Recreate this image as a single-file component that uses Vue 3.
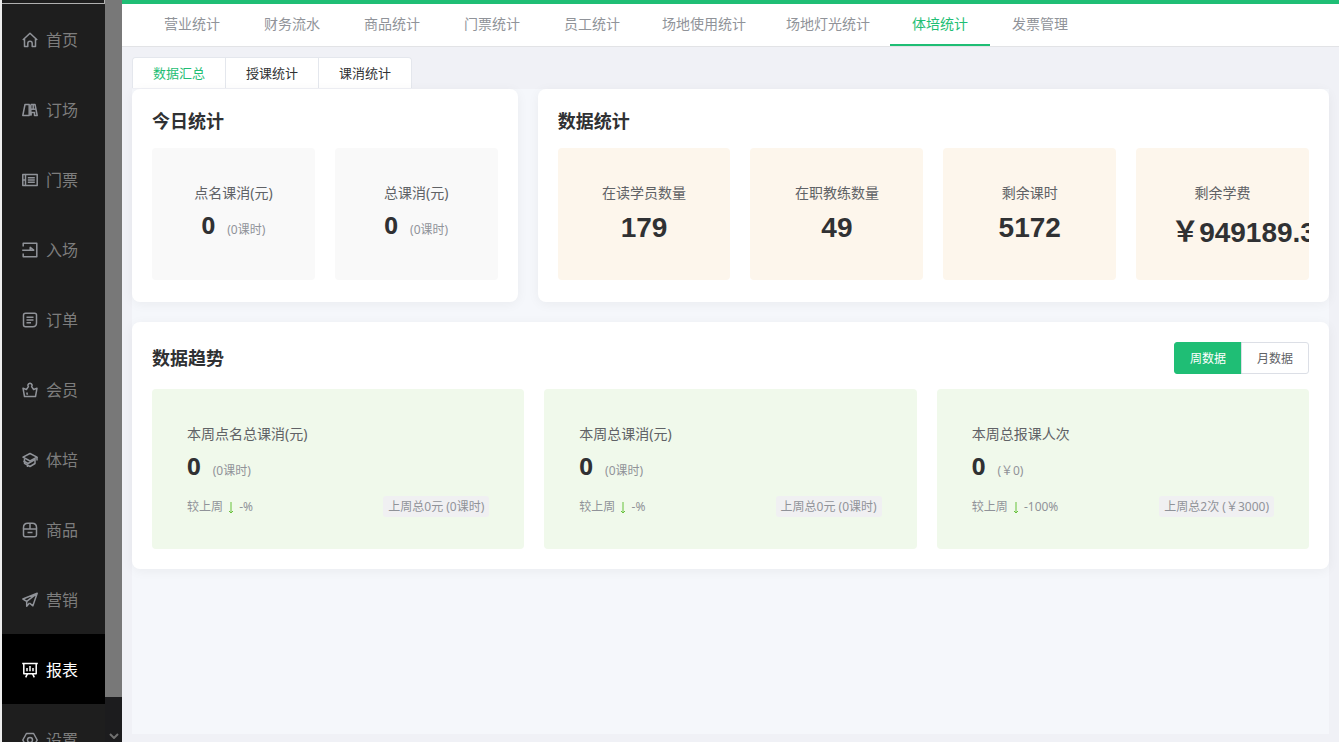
<script setup>
import { ref } from 'vue'

const menu = [
  { name: '首页', icon: 'home' },
  { name: '订场', icon: 'court' },
  { name: '门票', icon: 'ticket' },
  { name: '入场', icon: 'enter' },
  { name: '订单', icon: 'order' },
  { name: '会员', icon: 'member' },
  { name: '体培', icon: 'train' },
  { name: '商品', icon: 'goods' },
  { name: '营销', icon: 'send' },
  { name: '报表', icon: 'report' },
  { name: '设置', icon: 'setting' },
]
const icons = {
  home: ['M.8 8 8 1.200 15.200 8', 'M2.500 6.800v7.700h3.300v-3a2.200 2.200 0 0 1 4.400 0v3h3.300V6.800'],
  court: ['M3 2.500h4.200v11H.8z', 'M8.800 2.500H13l2.200 11h-2.700v-3H9v3', 'M8.800 2.500v11', 'M8.800 7.200h5', 'M11.200 2.500v4.700'],
  ticket: ['M3.500 2.500h11.700v11H3.500z', 'M3.500 2.500H.8v11h2.700', 'M.8 8h2.700', 'M5.800 5.800h7M5.800 8h7M5.800 10.200h7'],
  enter: ['M1.200 4.500V1.300h13.600v13.400H1.200v-3.200', 'M.2 8.200h11.500L8.200 5.400v2.300'],
  order: ['M3.500 1.300h9.200q1.800 0 1.800 1.800V11q0 3.700-3.700 3.700H3.500q-2 0-2-2V3.300q0-2 2-2z', 'M4.500 5.300h7M4.500 8h7M4.500 10.700h4.500'],
  member: ['M1 6.200l3.400 1.300L6.400 4.600a2 2 0 1 1 3.200 0l2 2.900L15 6.200l-1.500 8.300h-11z', 'M4.800 10.500l.6 2.200'],
  train: ['M8 1.500 15 5.200 8 9 1 5.200z', 'M2.500 6.800v4.500l5.500 3.200 5-3v-4.500', 'M1.500 9 6 11.500l7-4', 'M15 5v3.500', 'M5.500 12.500v2.500'],
  goods: ['M1.500 7h13v6q0 1.700-1.700 1.700H3.200q-1.700 0-1.700-1.700z', 'M1.500 7V5.500q0-4.300 4.300-4.300h4.400q4.300 0 4.300 4.300V7', 'M8 1.200V7', 'M5.500 10.500h5'],
  send: ['M15.200 1.300.9 7l3.800 2.300L15.200 1.300 10.900 13.800 7.500 11', 'M4.700 9.300v5l2.800-3.300'],
  report: ['M.2 1.500h15.600', 'M1.800 1.500v10.200h12.400V1.500', 'M5 6v3.300M8 4v5.300M11 6v3.300', 'M5.500 11.700 3.700 15.300M10.500 11.700l1.800 3.600'],
  setting: ['M4.400 1.500h7.200L15.200 8l-3.600 6.500H4.400L.8 8z', 'M8 5.500a2.500 2.500 0 1 1 0 5 2.500 2.500 0 0 1 0-5z'],
}
const activeMenu = ref('报表')

const navs = ['营业统计', '财务流水', '商品统计', '门票统计', '员工统计', '场地使用统计', '场地灯光统计', '体培统计', '发票管理']
const activeNav = ref('体培统计')

const tabs = ['数据汇总', '授课统计', '课消统计']
const activeTab = ref('数据汇总')

const today = [
  { label: '点名课消(元)', value: '0', note: '(0课时)' },
  { label: '总课消(元)', value: '0', note: '(0课时)' },
]
const totals = [
  { label: '在读学员数量', value: '179' },
  { label: '在职教练数量', value: '49' },
  { label: '剩余课时', value: '5172' },
  { label: '剩余学费', value: '￥949189.3', money: true },
]

const ranges = ['周数据', '月数据']
const activeRange = ref('周数据')
const trends = [
  { label: '本周点名总课消(元)', value: '0', note: '(0课时)', rate: '-%', last: '上周总0元 (0课时)' },
  { label: '本周总课消(元)', value: '0', note: '(0课时)', rate: '-%', last: '上周总0元 (0课时)' },
  { label: '本周总报课人次', value: '0', note: '(￥0)', rate: '-100%', last: '上周总2次 (￥3000)' },
]
</script>

<template>
  <div class="app">
    <aside class="sidebar">
      <div class="logo"></div>
      <nav class="menu">
        <a
          v-for="m in menu"
          :key="m.name"
          href="#"
          class="menu-item"
          :class="{ active: m.name === activeMenu }"
          @click.prevent="activeMenu = m.name"
        >
          <svg class="icon" viewBox="0 0 16 16" aria-hidden="true">
            <path v-for="d in icons[m.icon]" :key="d" :d="d" />
          </svg>
          <span>{{ m.name }}</span>
        </a>
      </nav>
    </aside>
    <div class="scrollbar" aria-hidden="true">
      <div class="thumb"></div>
      <div class="track">
        <svg class="arrow" viewBox="0 0 10 6"><path d="M1 1l4 4 4-4" /></svg>
      </div>
    </div>

    <div class="main">
      <nav class="topnav">
        <a
          v-for="n in navs"
          :key="n"
          href="#"
          class="nav-item"
          :class="{ active: n === activeNav }"
          @click.prevent="activeNav = n"
        >{{ n }}</a>
      </nav>

      <main class="page">
        <div class="tabs" role="tablist">
          <button
            v-for="t in tabs"
            :key="t"
            type="button"
            role="tab"
            class="tab"
            :class="{ active: t === activeTab }"
            :aria-selected="t === activeTab"
            @click="activeTab = t"
          >{{ t }}</button>
        </div>

        <div class="content">
          <div class="summary">
            <section class="card">
              <h2 class="title">今日统计</h2>
              <div class="tiles two">
                <div v-for="t in today" :key="t.label" class="tile gray">
                  <div class="label">{{ t.label }}</div>
                  <div class="amount"><strong class="num">{{ t.value }}</strong><span class="note">{{ t.note }}</span></div>
                </div>
              </div>
            </section>
            <section class="card wide">
              <h2 class="title">数据统计</h2>
              <div class="tiles four">
                <div v-for="t in totals" :key="t.label" class="tile cream">
                  <div class="label">{{ t.label }}</div>
                  <div class="total" :class="{ money: t.money }">{{ t.value }}</div>
                </div>
              </div>
            </section>
          </div>

          <section class="card trend">
            <header class="trend-head">
              <h2 class="title">数据趋势</h2>
              <div class="range">
                <button
                  v-for="r in ranges"
                  :key="r"
                  type="button"
                  class="range-btn"
                  :class="{ active: r === activeRange }"
                  @click="activeRange = r"
                >{{ r }}</button>
              </div>
            </header>
            <div class="tiles three">
              <div v-for="t in trends" :key="t.label" class="tile green">
                <div class="label">{{ t.label }}</div>
                <div class="amount"><strong class="num">{{ t.value }}</strong><span class="note">{{ t.note }}</span></div>
                <div class="compare">
                  <span class="rate">较上周
                    <svg class="down" viewBox="0 0 6 12" aria-hidden="true"><path d="M3 0v11M1 9l2 2 2-2" /></svg>
                    {{ t.rate }}</span>
                  <span class="tag">{{ t.last }}</span>
                </div>
              </div>
            </div>
          </section>
        </div>
      </main>
    </div>
  </div>
</template>

<style>
body {
  margin: 0;
  background: #f0f1f6;
}
</style>

<style scoped>
.app {
  display: flex;
  height: 100vh;
  overflow: hidden;
  box-sizing: border-box;
  border-left: 2px solid #eeeeee;
  background: #f0f1f6;
  font-family: "Noto Sans", "Noto Sans CJK SC", sans-serif;
  color: #303133;
}
a {
  text-decoration: none;
}
button {
  font-family: inherit;
  margin: 0;
  cursor: pointer;
}
.sidebar {
  width: 103px;
  flex: none;
  overflow: hidden;
  background: #1e1e1e;
}
.logo {
  height: 3px;
  border-right: 1px solid #b0b0b0;
  border-bottom: 1px solid #b0b0b0;
}
.menu-item {
  display: flex;
  align-items: center;
  gap: 8px;
  height: 70px;
  padding: 2px 20px 0;
  box-sizing: border-box;
  font-size: 16px;
  line-height: 24px;
  color: #7d7d7d;
}
.menu-item.active {
  background: #000;
  color: #fff;
}
.icon {
  width: 16px;
  height: 16px;
  flex: none;
  fill: none;
  stroke: #909399;
  stroke-width: 1.5;
  stroke-linejoin: round;
}
.active .icon {
  stroke: #fff;
}
.scrollbar {
  display: flex;
  flex-direction: column;
  width: 17px;
  flex: none;
}
.thumb {
  flex: 1;
  background: #787878;
}
.track {
  display: flex;
  align-items: flex-end;
  justify-content: center;
  height: 45px;
  padding-bottom: 3px;
  box-sizing: border-box;
  background: #1c1c1e;
}
.arrow {
  width: 10px;
  height: 6px;
  fill: none;
  stroke: #707070;
  stroke-width: 2;
}
.main {
  display: flex;
  flex-direction: column;
  flex: 1;
  min-width: 0;
}
.topnav {
  display: flex;
  padding: 0 20px;
  border-top: 4px solid #1fbe75;
  border-bottom: 1px solid #e2e3e6;
  background: #fff;
}
.nav-item {
  min-width: 100px;
  height: 42px;
  padding: 0 20px;
  box-sizing: border-box;
  border-bottom: 2px solid transparent;
  font-size: 14px;
  line-height: 40px;
  text-align: center;
  color: #909399;
}
.nav-item.active {
  color: #1fbe75;
  border-bottom-color: #1fbe75;
}
.page {
  display: flex;
  flex-direction: column;
  flex: 1;
  padding: 10px 10px 8px;
}
.tabs {
  display: flex;
  align-self: flex-start;
  margin-bottom: 1px;
  border: 1px solid #e4e7ed;
  border-bottom: 0;
  border-radius: 4px 4px 0 0;
  overflow: hidden;
}
.tab {
  height: 30px;
  padding: 0 20px;
  border: 0;
  background: #fff;
  font-size: 13px;
  line-height: 30px;
  color: #303133;
}
.tab + .tab {
  border-left: 1px solid #e4e7ed;
}
.tab.active {
  color: #1fbe75;
}
.content {
  flex: 1;
  background: #f5f7fb;
}
.summary {
  display: grid;
  grid-template-columns: repeat(3, minmax(0, 1fr));
  gap: 20px;
  margin-bottom: 20px;
}
.card {
  padding: 20px 20px 22px;
  border-radius: 8px;
  background: #fff;
  box-shadow: 0 2px 12px rgba(0, 0, 0, 0.05);
}
.wide {
  grid-column: span 2;
}
.title {
  margin: 0 0 15px;
  font-size: 18px;
  line-height: 24px;
  font-weight: 700;
}
.tiles {
  display: grid;
  gap: 20px;
}
.two {
  grid-template-columns: repeat(2, minmax(0, 1fr));
}
.three {
  grid-template-columns: repeat(3, minmax(0, 1fr));
}
.four {
  grid-template-columns: repeat(4, minmax(0, 1fr));
}
.tile {
  padding: 35px;
  border-radius: 4px;
  overflow: hidden;
}
.gray,
.cream {
  min-height: 62px;
  text-align: center;
}
.gray {
  background: #f9f9f9;
}
.gray .amount {
  justify-content: center;
}
.cream {
  padding-bottom: 24px;
  background: #fdf6ec;
}
.green {
  padding-bottom: 32px;
  background: #f0f9eb;
}
.label {
  font-size: 14px;
  line-height: 20px;
  white-space: nowrap;
  color: #606266;
}
.amount {
  display: flex;
  align-items: baseline;
  height: 32px;
  margin-top: 6px;
  line-height: 32px;
  white-space: nowrap;
}
.num {
  font-size: 24px;
  margin-right: 12px;
}
.note {
  font-size: 12px;
  color: #909399;
}
.total {
  margin-top: 6px;
  font-family: "Liberation Sans", "Noto Sans CJK SC", sans-serif;
  font-size: 28px;
  line-height: 38px;
  font-weight: 700;
}
.money {
  line-height: 47px;
}
.trend {
  padding-bottom: 20px;
}
.trend-head {
  display: flex;
  align-items: center;
  justify-content: space-between;
  margin-bottom: 15px;
}
.trend-head .title {
  margin: 0;
}
.range {
  display: flex;
}
.range-btn {
  height: 32px;
  padding: 0 15px;
  border: 1px solid #dcdfe6;
  background: #fff;
  font-size: 12px;
  color: #606266;
}
.range-btn:first-child {
  border-radius: 3px 0 0 3px;
}
.range-btn:last-child {
  margin-left: -1px;
  border-radius: 0 3px 3px 0;
}
.range-btn.active {
  border-color: #1fbe75;
  background: #1fbe75;
  color: #fff;
}
.compare {
  display: flex;
  align-items: center;
  justify-content: space-between;
  height: 21px;
  margin-top: 14px;
  font-size: 12px;
  line-height: 21px;
  white-space: nowrap;
  color: #909399;
}
.down {
  width: 6px;
  height: 12px;
  margin: 0 2px;
  vertical-align: -3px;
  fill: none;
  stroke: #67c23a;
}
.tag {
  padding: 0 5px;
  border-radius: 3px;
  background: #f0f0f2;
}
</style>
